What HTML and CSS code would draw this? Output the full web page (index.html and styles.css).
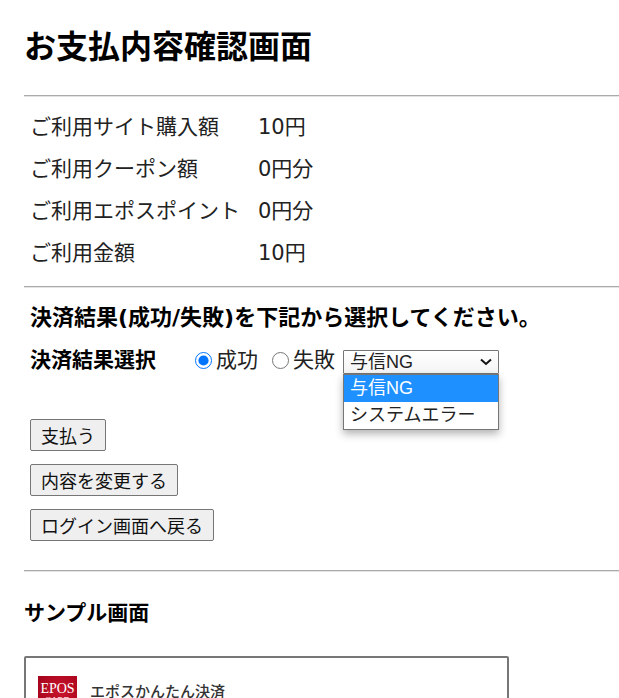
FILE: index.html
```html
<!DOCTYPE html>
<html lang="ja">
<head>
  <meta charset="UTF-8" />
  <meta name="viewport" content="width=device-width, initial-scale=1" />
  <title>お支払内容確認画面</title>
  <link rel="stylesheet" href="styles.css">
</head>
<body>
  <h1>お支払内容確認画面</h1>
  <hr />

  <!-- お支払内容 -->
  <table class="payment">
    <tr><th scope="row">ご利用サイト購入額</th><td>10円</td></tr>
    <tr><th scope="row">ご利用クーポン額</th><td>0円分</td></tr>
    <tr><th scope="row">ご利用エポスポイント</th><td>0円分</td></tr>
    <tr><th scope="row">ご利用金額</th><td>10円</td></tr>
  </table>
  <hr />

  <form class="result-form">
    <!-- 決済結果 -->
    <p class="result-title">決済結果(成功/失敗)を下記から選択してください。</p>
    <div class="result-row" role="radiogroup" aria-labelledby="resultLabel">
      <span class="result-label" id="resultLabel">決済結果選択</span>
      <label class="result-option"><input type="radio" name="result" value="ok" checked />成功</label>
      <label class="result-option"><input type="radio" name="result" value="ng" />失敗</label>
      <div class="error-select">
        <select name="error" aria-label="失敗">
          <option>与信NG</option>
          <option>システムエラー</option>
        </select>
        <svg class="arrow" viewBox="0 0 12 8" aria-hidden="true"><path d="M1 1.5 L6 6 L11 1.5" /></svg>
        <ul class="error-menu" role="listbox">
          <li class="selected" role="option" aria-selected="true">与信NG</li>
          <li role="option" aria-selected="false">システムエラー</li>
        </ul>
      </div>
    </div>

    <div class="buttons">
      <button type="submit">支払う</button>
      <button type="button">内容を変更する</button>
      <button type="button">ログイン画面へ戻る</button>
    </div>
  </form>
  <hr />

  <!-- サンプル -->
  <h2>サンプル画面</h2>
  <div class="sample">
    <div class="logo"><span class="logo-name">EPOS</span><span class="logo-sub">CARD</span></div>
    <span class="sample-title">エポスかんたん決済</span>
  </div>
</body>
</html>
```
FILE: styles.css
```css
html {
  overflow: hidden;
}
body {
  margin: 0 0 0 24px;
  font-family: "DejaVu Sans", "Noto Sans CJK JP", sans-serif;
  font-size: 21px;
  line-height: 42px;
  color: #000;
  background-color: #fff;
}
h1 {
  margin: 0;
  padding: 23px 0 30px;
  font-family: "Noto Sans CJK JP", sans-serif;
  font-size: 32px;
}
h2 {
  margin: 0;
  padding: 20px 0 22px;
  font-size: 21px;
}
hr {
  margin: 0;
  border: 0;
  border-top: 1px solid #aaa;
  border-bottom: 1px solid #e4e4e4;
}

/* お支払内容 */
.payment {
  margin: 9px 0 12px 6px;
  border-collapse: collapse;
}
.payment th,
.payment td {
  padding: 0;
  font-weight: 400;
  text-align: left;
  color: #222;
}
.payment th {
  padding-right: 18px;
}

/* 決済結果 */
.result-form {
  padding: 9px 0 29px 6px;
}
.result-title {
  margin: 0;
  font-size: 22px;
  font-weight: 700;
  white-space: nowrap;
}
.result-row {
  display: flex;
  align-items: center;
  white-space: nowrap;
}
.result-label {
  margin-right: 39px;
  font-weight: 700;
}
.result-option {
  display: flex;
  align-items: center;
  gap: 4px;
  margin-right: 14px;
  color: #222;
}
.result-option + .result-option {
  margin-right: 8px;
}
.result-option input {
  width: 17px;
  height: 17px;
  margin: 0;
}
.error-select {
  position: relative;
  width: 156px;
  height: 24px;
  margin-top: 4px;
  font-family: "Liberation Sans", "Noto Sans CJK JP", sans-serif;
  font-size: 18px;
}
.error-select select {
  display: block;
  width: 100%;
  height: 24px;
  padding: 0 6px;
  border: 1px solid #767676;
  border-radius: 1px;
  appearance: none;
  font: inherit;
  line-height: 22px;
  color: #222;
  background: linear-gradient(#fff, #f4f4f4);
}
.arrow {
  position: absolute;
  top: 8px;
  right: 7px;
  width: 12px;
  height: 8px;
  fill: none;
  stroke: #111;
  stroke-width: 2;
}
.error-menu {
  position: absolute;
  top: 24px;
  left: 0;
  width: 100%;
  margin: 0;
  padding: 0;
  box-sizing: border-box;
  border: 1px solid #767676;
  list-style: none;
  line-height: 27px;
  color: #222;
  background-color: #fff;
  box-shadow: 0 4px 8px rgba(0, 0, 0, 0.3);
}
.error-menu li {
  padding: 0 6px;
}
.error-menu .selected {
  color: #fff;
  background-color: #1e90ff;
}
.buttons {
  display: flex;
  flex-direction: column;
  align-items: flex-start;
  gap: 13px;
  padding-top: 38px;
}
button {
  height: 32px;
  padding: 0 10px;
  border: 1px solid #767676;
  border-radius: 2px;
  font-family: "Noto Sans CJK JP", sans-serif;
  font-size: 18px;
  line-height: 30px;
  color: #111;
  background-color: #efefef;
}

/* サンプル */
.sample {
  display: flex;
  align-items: flex-start;
  gap: 13px;
  width: 80vw;
  max-width: 485px;
  padding: 18px 12px 40px;
  box-sizing: border-box;
  border: 2px solid #777;
  border-radius: 2px;
}
.logo {
  display: flex;
  flex-direction: column;
  align-items: center;
  width: 39px;
  height: 39px;
  padding-top: 6px;
  box-sizing: border-box;
  font-family: "Liberation Serif", serif;
  color: #fff;
  background: radial-gradient(circle at 60% 40%, #c9142c, #9c0018);
}
.logo-name {
  font-size: 14px;
  line-height: 14px;
}
.logo-sub {
  font-size: 9px;
  line-height: 9px;
}
.sample-title {
  padding-top: 6px;
  font-size: 15px;
  font-weight: 500;
  line-height: 20px;
  color: #333;
}
```
